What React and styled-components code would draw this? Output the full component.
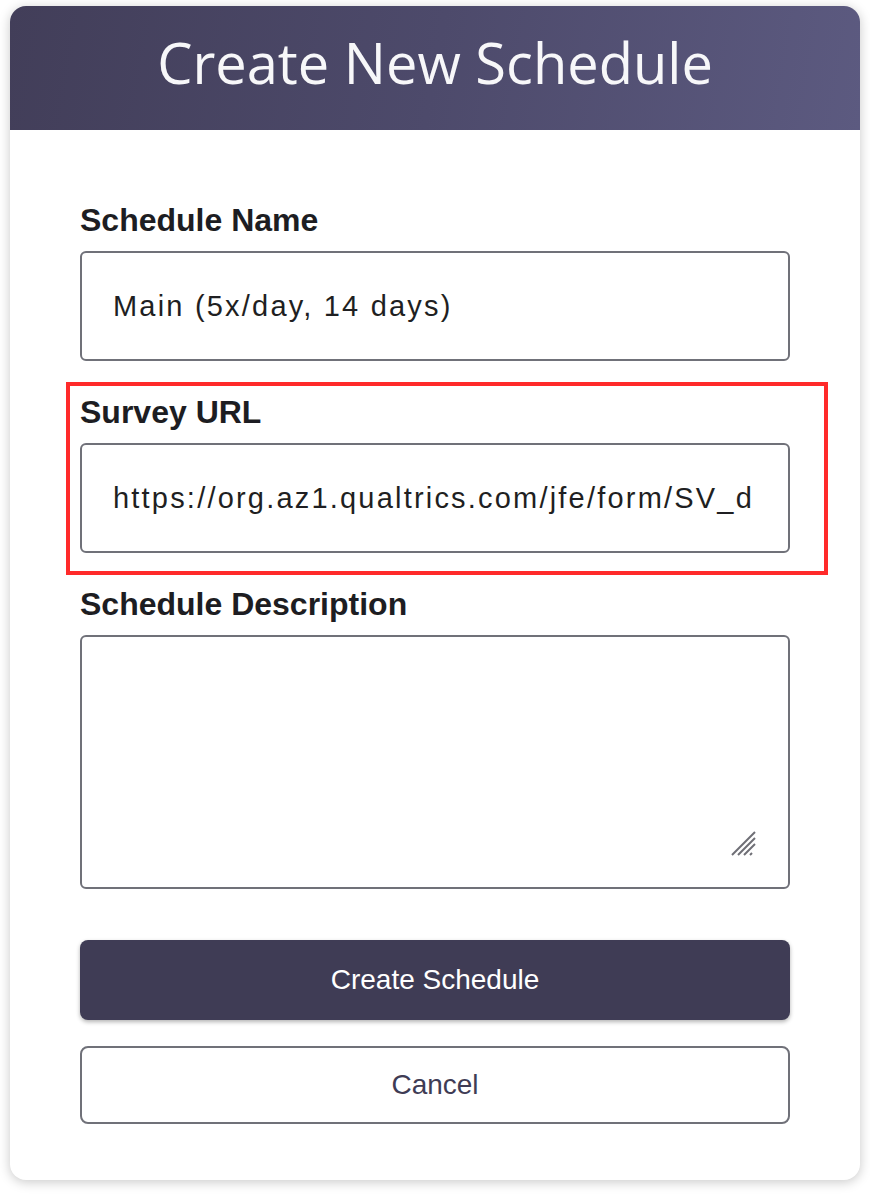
import styled, { createGlobalStyle } from "styled-components";

const GlobalStyle = createGlobalStyle`
    body {
        margin: 0;
        background: #ffffff;
        font-family: "Liberation Sans", Arial, sans-serif;
    }
`

export default function App () {
    return (
        <>
            <GlobalStyle />
            <Page>
                <Card>
                    <Header>
                        <Title>Create New Schedule</Title>
                    </Header>
                    <Form onSubmit={e => e.preventDefault()}>
                        <Field>
                            <Label htmlFor="name">Schedule Name</Label>
                            <TextInput id="name" defaultValue="Main (5x/day, 14 days)" />
                        </Field>
                        <Field highlighted>
                            <Label htmlFor="url">Survey URL</Label>
                            <TextInput id="url" defaultValue="https://org.az1.qualtrics.com/jfe/form/SV_d" />
                        </Field>
                        <Field>
                            <Label htmlFor="desc">Schedule Description</Label>
                            <AreaWrap>
                                <TextArea id="desc" />
                                <Grip width="26" height="26" viewBox="0 0 26 26">
                                    <path d="M2 25 L25 2 M8 25 L25 8 M14 25 L25 14 M20 25 L22 23" stroke="#6f6f76" strokeWidth="2" fill="none" />
                                </Grip>
                            </AreaWrap>
                        </Field>
                        <Actions>
                            <Button primary type="submit">Create Schedule</Button>
                            <Button type="button">Cancel</Button>
                        </Actions>
                    </Form>
                </Card>
            </Page>
        </>
    )
}

const Page = styled.div`
    padding: 6px 10px 18px;
`

const Card = styled.div`
    background: #ffffff;
    border-radius: 16px;
    box-shadow: 0 2px 12px rgba(0, 0, 0, 0.22);
`

const Header = styled.div`
    height: 124px;
    display: flex;
    justify-content: center;
    align-items: center;
    border-radius: 16px 16px 0 0;
    background: linear-gradient(100deg, #423e59 0%, #4d4a6b 50%, #5c5a80 100%);
`

const Title = styled.h1`
    margin: 0 0 12px;
    font-family: "Open Sans", "Noto Sans", sans-serif;
    font-weight: 400;
    font-size: 56px;
    color: #f7f7f9;
`

const Form = styled.form`
    display: flex;
    flex-direction: column;
    padding: 72px 70px 56px;
`

const Field = styled.div`
    position: relative;
    display: flex;
    flex-direction: column;
    margin-bottom: 33px;

    ${props => props.highlighted && `
        &::after {
            content: "";
            position: absolute;
            top: -12px;
            bottom: -22px;
            left: -14px;
            right: -38px;
            border: 4px solid #ff2a2a;
            pointer-events: none;
        }
    `}
`

const Label = styled.label`
    font-size: 32px;
    font-weight: 700;
    line-height: 36px;
    color: #1d1d22;
    margin-bottom: 13px;
`

const TextInput = styled.input`
    box-sizing: border-box;
    height: 110px;
    width: 100%;
    padding: 0 31px;
    border: 2px solid #707179;
    border-radius: 6px;
    font-family: "Liberation Sans", Arial, sans-serif;
    font-size: 29px;
    letter-spacing: 2.2px;
    color: #1f1f22;
    background: #ffffff;
    outline: none;
`

const AreaWrap = styled.div`
    position: relative;
    display: flex;
`

const TextArea = styled.textarea`
    box-sizing: border-box;
    width: 100%;
    height: 254px;
    padding: 20px 31px;
    border: 2px solid #707179;
    border-radius: 6px;
    font-family: "Liberation Sans", Arial, sans-serif;
    font-size: 28px;
    resize: none;
    outline: none;
`

const Grip = styled.svg`
    position: absolute;
    right: 34px;
    bottom: 33px;
    pointer-events: none;
`

const Actions = styled.div`
    display: flex;
    flex-direction: column;
    gap: 26px;
    margin-top: 18px;
`

const Button = styled.button`
    box-sizing: border-box;
    width: 100%;
    height: ${props => props.primary ? "80px" : "78px"};
    border-radius: 8px;
    font-family: "Liberation Sans", Arial, sans-serif;
    font-size: 28px;
    cursor: pointer;
    border: ${props => props.primary ? "none" : "2px solid #707179"};
    background: ${props => props.primary ? "#3f3c55" : "#ffffff"};
    color: ${props => props.primary ? "#ffffff" : "#3f3c55"};
    box-shadow: ${props => props.primary ? "0 2px 4px rgba(0, 0, 0, 0.3)" : "none"};
`
